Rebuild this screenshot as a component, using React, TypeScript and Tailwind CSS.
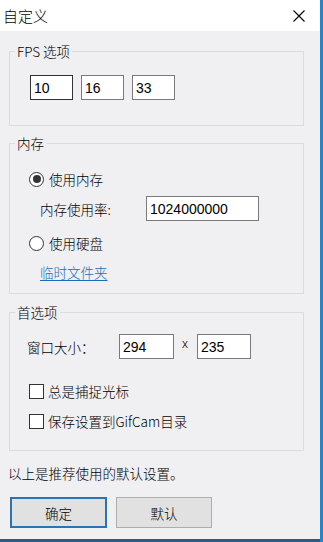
import React from "react";

const font = "font-['Noto_Sans_CJK_SC','Liberation_Sans',sans-serif]";

function Field({ value, w, focused }: { value: string; w: string; focused?: boolean }) {
  return (
    <div
      className={`${w} h-[25px] flex items-center bg-white border pl-[3px] text-[14px] leading-[16px] font-['Liberation_Sans',sans-serif] font-normal text-black ${
        focused ? "border-[#333333]" : "border-[#7a7a7a]"
      }`}
    >
      {value}
    </div>
  );
}

function Radio({ checked, label }: { checked?: boolean; label: string }) {
  return (
    <div className="flex items-center h-[20px]">
      <span className="w-[15px] h-[15px] rounded-full border border-[#333333] bg-white flex items-center justify-center">
        {checked && <span className="w-[8px] h-[8px] rounded-full bg-[#333333]" />}
      </span>
      <span className="ml-[5px]">{label}</span>
    </div>
  );
}

function Check({ label }: { label: string }) {
  return (
    <div className="flex items-center h-[20px]">
      <span className="w-[15px] h-[15px] border border-[#333333] bg-white" />
      <span className="ml-[4px]">{label}</span>
    </div>
  );
}

function Group({ title, className, children }: { title: string; className?: string; children: React.ReactNode }) {
  return (
    <fieldset className={`w-[295px] border border-[#dcdcdc] ${className ?? ""}`}>
      <legend className="ml-[5px] px-[2px] text-[13.5px] leading-[16px]">{title}</legend>
      {children}
    </fieldset>
  );
}

export default function App() {
  return (
    <div className={`w-[323px] h-[542px] flex flex-col bg-[#f0eff2] text-black text-[13.5px] leading-[16px] font-light border-r-[3px] border-[#1f86d4] ${font}`}>
      {/* Title bar */}
      <div className="h-[31px] bg-white flex items-center justify-between pl-[3px] pr-[14px] shrink-0">
        <span className="text-[15px] leading-[18px]">自定义</span>
        <svg width="12" height="12" viewBox="0 0 12 12" className="mr-[1px]">
          <path d="M0.5 0.5 L11.5 11.5 M11.5 0.5 L0.5 11.5" stroke="#000" strokeWidth="1.1" fill="none" />
        </svg>
      </div>

      <div className="flex-1 flex flex-col pl-[9px]">
        <Group title="FPS 选项" className="mt-[12px]">
          <div className="flex gap-[8px] pl-[20px] pt-[16px] pb-[25px]">
            <Field value="10" w="w-[43px]" focused />
            <Field value="16" w="w-[43px]" />
            <Field value="33" w="w-[43px]" />
          </div>
        </Group>

        <Group title="内存" className="mt-[9px]">
          <div className="flex flex-col pl-[19px] pt-[18px] pb-[12px]">
            <Radio checked label="使用内存" />
            <div className="flex items-center mt-[7px] pl-[11px]">
              <span className="w-[106px]">内存使用率:</span>
              <Field value="1024000000" w="w-[113px]" />
            </div>
            <div className="mt-[12px]">
              <Radio label="使用硬盘" />
            </div>
            <span className="mt-[10px] ml-[11px] h-[18px] flex items-center text-[#1a6db8] underline underline-offset-2">
              临时文件夹
            </span>
          </div>
        </Group>

        <Group title="首选项" className="mt-[10px]">
          <div className="flex flex-col pl-[17px] pt-[14px] pb-[19px]">
            <div className="flex items-center">
              <span className="w-[92px]">窗口大小：</span>
              <Field value="294" w="w-[55px]" />
              <span className="w-[23px] self-start pt-[2px] pl-[8px] text-[13px] leading-[14px]">x</span>
              <Field value="235" w="w-[54px]" />
            </div>
            <div className="mt-[22px] pl-[2px]">
              <Check label="总是捕捉光标" />
            </div>
            <div className="mt-[10px] pl-[2px]">
              <Check label="保存设置到GifCam目录" />
            </div>
          </div>
        </Group>

        <div className="mt-[13px] -ml-[1px] h-[18px] flex items-center">以上是推荐使用的默认设置。</div>

        <div className="mt-[15px] flex gap-[9px] pl-[1px]">
          <button className="w-[97px] h-[31px] bg-[#e1e1e1] border-2 border-[#2a74b3] flex items-center justify-center">
            确定
          </button>
          <button className="w-[96px] h-[31px] bg-[#e1e1e1] border border-[#adadad] flex items-center justify-center">
            默认
          </button>
        </div>
      </div>
      <div className="h-[3px] bg-[#2b5c86] shrink-0" />
    </div>
  );
}
